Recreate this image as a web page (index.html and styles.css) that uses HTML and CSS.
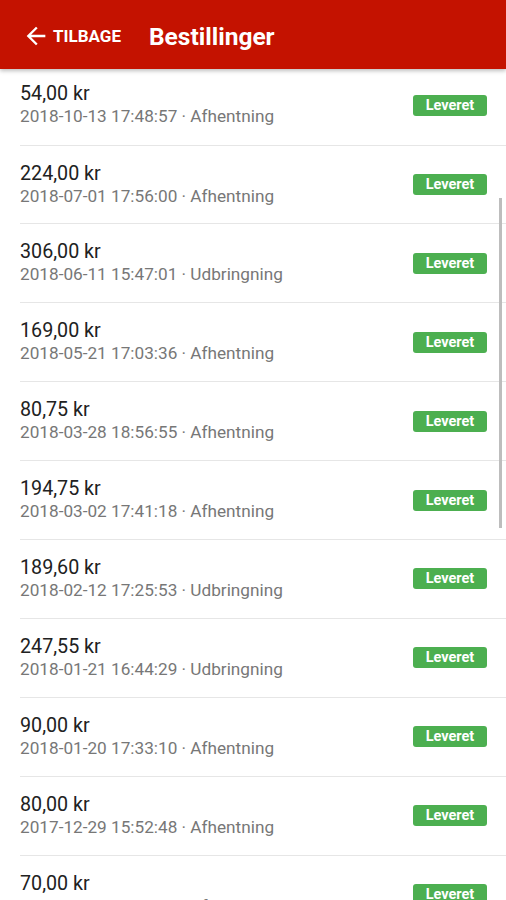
FILE: index.html
```html
<!DOCTYPE html>
<html lang="da">

<head>
    <meta charset="UTF-8">
    <meta name="viewport" content="width=device-width, initial-scale=1.0">
    <title>Bestillinger</title>
    <link rel="stylesheet" href="styles.css">
</head>

<body>
    <header class="topbar">
        <a href="javascript:;" class="back">
            <svg class="back-icon" viewBox="0 0 24 24" width="28" height="28">
                <path d="M20 11H7.83l5.59-5.59L12 4l-8 8 8 8 1.41-1.41L7.83 13H20v-2z" fill="#fff"/>
            </svg>
            <span>Tilbage</span>
        </a>
        <h1 class="title">Bestillinger</h1>
    </header>

    <div class="scroller">
        <ul class="orders">
            <li class="order first">
                <div class="info">
                    <div class="amount">54,00 kr</div>
                    <div class="meta">2018-10-13 17:48:57 · Afhentning</div>
                </div>
                <span class="badge">Leveret</span>
            </li>
            <li class="order">
                <div class="info">
                    <div class="amount">224,00 kr</div>
                    <div class="meta">2018-07-01 17:56:00 · Afhentning</div>
                </div>
                <span class="badge">Leveret</span>
            </li>
            <li class="order">
                <div class="info">
                    <div class="amount">306,00 kr</div>
                    <div class="meta">2018-06-11 15:47:01 · Udbringning</div>
                </div>
                <span class="badge">Leveret</span>
            </li>
            <li class="order">
                <div class="info">
                    <div class="amount">169,00 kr</div>
                    <div class="meta">2018-05-21 17:03:36 · Afhentning</div>
                </div>
                <span class="badge">Leveret</span>
            </li>
            <li class="order">
                <div class="info">
                    <div class="amount">80,75 kr</div>
                    <div class="meta">2018-03-28 18:56:55 · Afhentning</div>
                </div>
                <span class="badge">Leveret</span>
            </li>
            <li class="order">
                <div class="info">
                    <div class="amount">194,75 kr</div>
                    <div class="meta">2018-03-02 17:41:18 · Afhentning</div>
                </div>
                <span class="badge">Leveret</span>
            </li>
            <li class="order">
                <div class="info">
                    <div class="amount">189,60 kr</div>
                    <div class="meta">2018-02-12 17:25:53 · Udbringning</div>
                </div>
                <span class="badge">Leveret</span>
            </li>
            <li class="order">
                <div class="info">
                    <div class="amount">247,55 kr</div>
                    <div class="meta">2018-01-21 16:44:29 · Udbringning</div>
                </div>
                <span class="badge">Leveret</span>
            </li>
            <li class="order">
                <div class="info">
                    <div class="amount">90,00 kr</div>
                    <div class="meta">2018-01-20 17:33:10 · Afhentning</div>
                </div>
                <span class="badge">Leveret</span>
            </li>
            <li class="order">
                <div class="info">
                    <div class="amount">80,00 kr</div>
                    <div class="meta">2017-12-29 15:52:48 · Afhentning</div>
                </div>
                <span class="badge">Leveret</span>
            </li>
            <li class="order">
                <div class="info">
                    <div class="amount">70,00 kr</div>
                    <div class="meta">2017-11-21 15:30:37 · Afhentning</div>
                </div>
                <span class="badge">Leveret</span>
            </li>
        </ul>
        <div class="scrollbar"></div>
    </div>
</body>

</html>
```

FILE: styles.css
```css
* {
    margin: 0;
    padding: 0;
    box-sizing: border-box;
}

ul {
    list-style: none;
}

html,
body {
    height: 100%;
    overflow: hidden;
}

body {
    font-family: Roboto, "Noto Sans", sans-serif;
    background-color: #fff;
    color: #212121;
}

.topbar {
    position: relative;
    z-index: 2;
    display: flex;
    align-items: center;
    height: 69px;
    padding-left: 22px;
    padding-top: 3px;
    background-color: #c41200;
    box-shadow: 0 2px 4px rgba(0, 0, 0, 0.25);
    color: #fff;
}

.back {
    display: flex;
    align-items: center;
    gap: 3px;
    color: #fff;
    text-decoration: none;
    font-size: 17px;
    font-weight: 700;
    text-transform: uppercase;
}

.back-icon {
    width: 28px;
    height: 28px;
}

.title {
    margin-left: 28px;
    font-size: 24.5px;
    font-weight: 700;
}

.scroller {
    position: relative;
    height: 831px;
    overflow: hidden;
}

.order {
    display: flex;
    align-items: center;
    justify-content: space-between;
    height: 78.9px;
    margin-left: 20px;
    padding-right: 19px;
    border-bottom: 1px solid #e6e6e6;
}

.order.first {
    height: 76.6px;
    padding-bottom: 3px;
}

.info {
    display: flex;
    flex-direction: column;
    gap: 1px;
}

.amount {
    font-size: 19.7px;
    line-height: 22px;
    color: #212121;
}

.meta {
    font-size: 17.2px;
    line-height: 21px;
    color: #777;
}

.badge {
    display: block;
    width: 74px;
    height: 21px;
    line-height: 21px;
    border-radius: 3px;
    background-color: #4caf50;
    color: #fff;
    text-align: center;
    font-size: 14.5px;
    font-weight: 700;
}

.scrollbar {
    position: absolute;
    top: 129px;
    right: 4px;
    width: 3px;
    height: 330px;
    background-color: #bdbdbd;
}
```
